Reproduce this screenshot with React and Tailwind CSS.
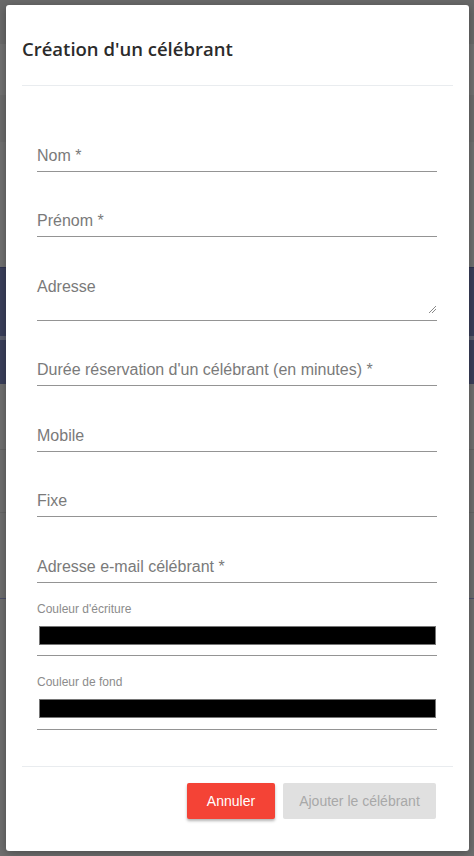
import React from "react";

const fieldsTop = [
  { label: "Nom *", h: "h-[65px]" },
  { label: "Prénom *", h: "h-[65px]" },
];

const fieldsBottom = [
  { label: "Durée réservation d'un célébrant (en minutes) *", h: "h-[65px]" },
  { label: "Mobile", h: "h-[66px]" },
  { label: "Fixe", h: "h-[65px]" },
  { label: "Adresse e-mail célébrant *", h: "h-[66px]" },
];

function TextField({ label, h }) {
  return (
    <div className={`${h} flex items-end pb-[6px] border-b border-[#949494]`}>
      <span className="text-[16px] leading-[18px] text-[#7a7a7a]">{label}</span>
    </div>
  );
}

function ColorField({ label, h }) {
  return (
    <div className={`${h} pt-[19px] border-b border-[#949494]`}>
      <div className="text-[12px] leading-[14px] text-[#8c8c8c]">{label}</div>
      <div className="mt-[10px] ml-[2px] mr-[1px] h-[19px] border border-[#767676] bg-black" />
    </div>
  );
}

export default function App() {
  return (
    <div className="relative w-[474px] h-[856px] overflow-hidden bg-[#6e6e6e]" style={{ fontFamily: "'Liberation Sans', Arial, sans-serif" }}>
      {/* BACKDROP (page behind the modal) */}
      <div className="flex flex-col">
        <div className="h-[44px] bg-[#696969]" />
        <div className="h-[51px] bg-[#717171]" />
        <div className="h-[47px] bg-[#6b6b6b]" />
        <div className="h-[125px] bg-[#707070]" />
        <div className="h-[1px] bg-[#2f3350]" />
        <div className="h-[68px] bg-[#3a3f5a]" />
        <div className="h-[4px] bg-[#5c5f6d]" />
        <div className="h-[44px] bg-[#3a3f5a]" />
        <div className="h-[65px] bg-[#6f6f6f]" />
        <div className="h-[1px] bg-[#646464]" />
        <div className="h-[62px] bg-[#6e6e6e]" />
        <div className="h-[1px] bg-[#646464]" />
        <div className="h-[85px] bg-[#6d6d6d]" />
        <div className="h-[1px] bg-[#4c4f6a]" />
        <div className="flex-1 bg-[#6e6e6e]" />
      </div>

      {/* MODAL */}
      <div className="absolute left-[6px] top-[5px] w-[463px] h-[846px] bg-white rounded-[3px] shadow-[0_2px_8px_rgba(0,0,0,0.3)] flex flex-col">
        <div className="mx-4 pt-[29px] pb-[21px] border-b border-[#e9ecef]">
          <h5 className="text-[18.5px] leading-[30px] font-semibold text-[#2b2b2b]" style={{ fontFamily: "'Open Sans', 'Noto Sans', sans-serif" }}>
            Création d'un célébrant
          </h5>
        </div>

        <div className="pl-[31px] pr-[32px] pt-[21px]">
          {fieldsTop.map((f) => (
            <TextField key={f.label} label={f.label} h={f.h} />
          ))}

          {/* textarea */}
          <div className="relative h-[84px] pt-[41px] border-b border-[#949494]">
            <span className="block text-[16px] leading-[18px] text-[#7a7a7a]">Adresse</span>
            <svg className="absolute right-[1px] bottom-[7px]" width="8" height="8" viewBox="0 0 8 8">
              <path d="M1 8 L8 1 M4 8 L8 4" stroke="#8a8a8a" strokeWidth="1" />
            </svg>
          </div>

          {fieldsBottom.map((f) => (
            <TextField key={f.label} label={f.label} h={f.h} />
          ))}

          <ColorField label="Couleur d'écriture" h="h-[73px]" />
          <ColorField label="Couleur de fond" h="h-[74px]" />
        </div>

        <div className="flex-1" />

        <div className="mx-4 border-t border-[#e9ecef] pt-[16px] pb-[32px] pr-[17px] flex justify-end gap-2">
          <button className="h-[36px] w-[88px] rounded-[2px] bg-[#f44336] text-white text-[14px] font-medium shadow-[0_2px_3px_rgba(0,0,0,0.3)]">
            Annuler
          </button>
          <button className="h-[36px] w-[153px] rounded-[2px] bg-[#e0e0e0] text-[#a8a8a8] text-[14px]">
            Ajouter le célébrant
          </button>
        </div>
      </div>
    </div>
  );
}
